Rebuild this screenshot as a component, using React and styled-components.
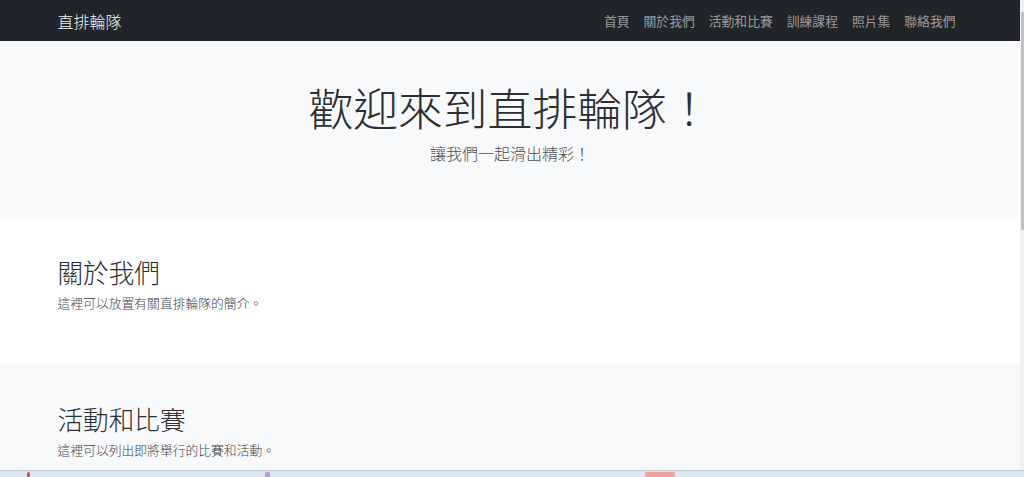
import styled, { createGlobalStyle } from 'styled-components';

const GlobalStyle = createGlobalStyle`
  html, body {
    margin: 0;
    padding: 0;
    background: #fff;
  }
  body {
    font-family: "Noto Sans CJK TC", "Noto Sans", sans-serif;
    color: #212529;
  }
  * { box-sizing: border-box; }
`;

const Screen = styled.div`
  display: flex;
  flex-direction: column;
  width: 1024px;
  height: 477px;
  overflow: hidden;
`;

const Viewport = styled.div`
  display: flex;
  flex: 1;
  min-height: 0;
`;

const Page = styled.div`
  width: 1020px;
  overflow: hidden;
`;

const ScrollTrack = styled.div`
  width: 4px;
  background: #f1f1f1;
  padding-top: 12px;
  padding-left: 1px;
`;

const ScrollThumb = styled.div`
  height: 218px;
  background: #c1c1c1;
`;

const Container = styled.div`
  max-width: 905px;
  margin: 0 auto;
`;

const Navbar = styled.nav`
  background: #212529;
  height: 41px;
`;

const NavInner = styled(Container)`
  display: flex;
  align-items: center;
  justify-content: space-between;
  height: 100%;
`;

const Brand = styled.a`
  color: #f4f4f4;
  font-size: 16px;
  font-weight: 300;
  line-height: 24px;
  text-decoration: none;
`;

const NavList = styled.ul`
  display: flex;
  list-style: none;
  margin: 0;
  padding: 0;
`;

const NavLink = styled.a`
  display: block;
  padding: 6px 7px;
  font-size: 12.8px;
  line-height: 19px;
  color: rgba(255, 255, 255, 0.55);
  text-decoration: none;
`;

const Hero = styled.header`
  background: #f8f9fa;
  padding: 39px 0 39px;
  text-align: center;
`;

const HeroTitle = styled.h1`
  margin: 0 0 7px;
  font-size: 44.8px;
  font-weight: 300;
  line-height: 54px;
  color: #2b2f33;
`;

const Lead = styled.p`
  margin: 0 0 13px;
  font-size: 16px;
  font-weight: 300;
  line-height: 24px;
  color: #4a4f54;
`;

const Section = styled.section`
  background: ${(p) => (p.$muted ? '#f8f9fa' : '#fff')};
  padding: 39px 0;
`;

const SectionTitle = styled.h2`
  margin: 0 0 6px;
  font-size: 25.6px;
  font-weight: 300;
  line-height: 31px;
  color: #2b2f33;
`;

const Text = styled.p`
  margin: 0 0 13px;
  font-size: 12.8px;
  font-weight: 300;
  line-height: 19px;
  color: #40454a;
`;

const Taskbar = styled.div`
  display: flex;
  align-items: flex-end;
  height: 7px;
  border-top: 1px solid #c3cad3;
  background: #dce7f4;
  padding-left: 27px;
`;

const TaskIcon = styled.span`
  display: block;
  width: ${(p) => p.$w}px;
  height: 5px;
  margin-left: ${(p) => p.$gap}px;
  background: ${(p) => p.$color};
  border-radius: 2px 2px 0 0;
`;

const links = ['首頁', '關於我們', '活動和比賽', '訓練課程', '照片集', '聯絡我們'];

const sections = [
  { title: '關於我們', text: '這裡可以放置有關直排輪隊的簡介。' },
  { title: '活動和比賽', text: '這裡可以列出即將舉行的比賽和活動。', muted: true },
];

export default function App() {
  return (
    <>
      <GlobalStyle />
      <Screen>
        <Viewport>
          <Page>
            <Navbar>
              <NavInner>
                <Brand href="#">直排輪隊</Brand>
                <NavList>
                  {links.map((l) => (
                    <li key={l}>
                      <NavLink href="#">{l}</NavLink>
                    </li>
                  ))}
                </NavList>
              </NavInner>
            </Navbar>
            <Hero>
              <Container>
                <HeroTitle>歡迎來到直排輪隊！</HeroTitle>
                <Lead>讓我們一起滑出精彩！</Lead>
              </Container>
            </Hero>
            {sections.map((s) => (
              <Section key={s.title} $muted={s.muted}>
                <Container>
                  <SectionTitle>{s.title}</SectionTitle>
                  <Text>{s.text}</Text>
                </Container>
              </Section>
            ))}
          </Page>
          <ScrollTrack>
            <ScrollThumb />
          </ScrollTrack>
        </Viewport>
        <Taskbar>
          <TaskIcon $w={3} $gap={0} $color="#d9534f" />
          <TaskIcon $w={5} $gap={235} $color="#b39ddb" />
          <TaskIcon $w={30} $gap={375} $color="#f0a39a" />
        </Taskbar>
      </Screen>
    </>
  );
}
